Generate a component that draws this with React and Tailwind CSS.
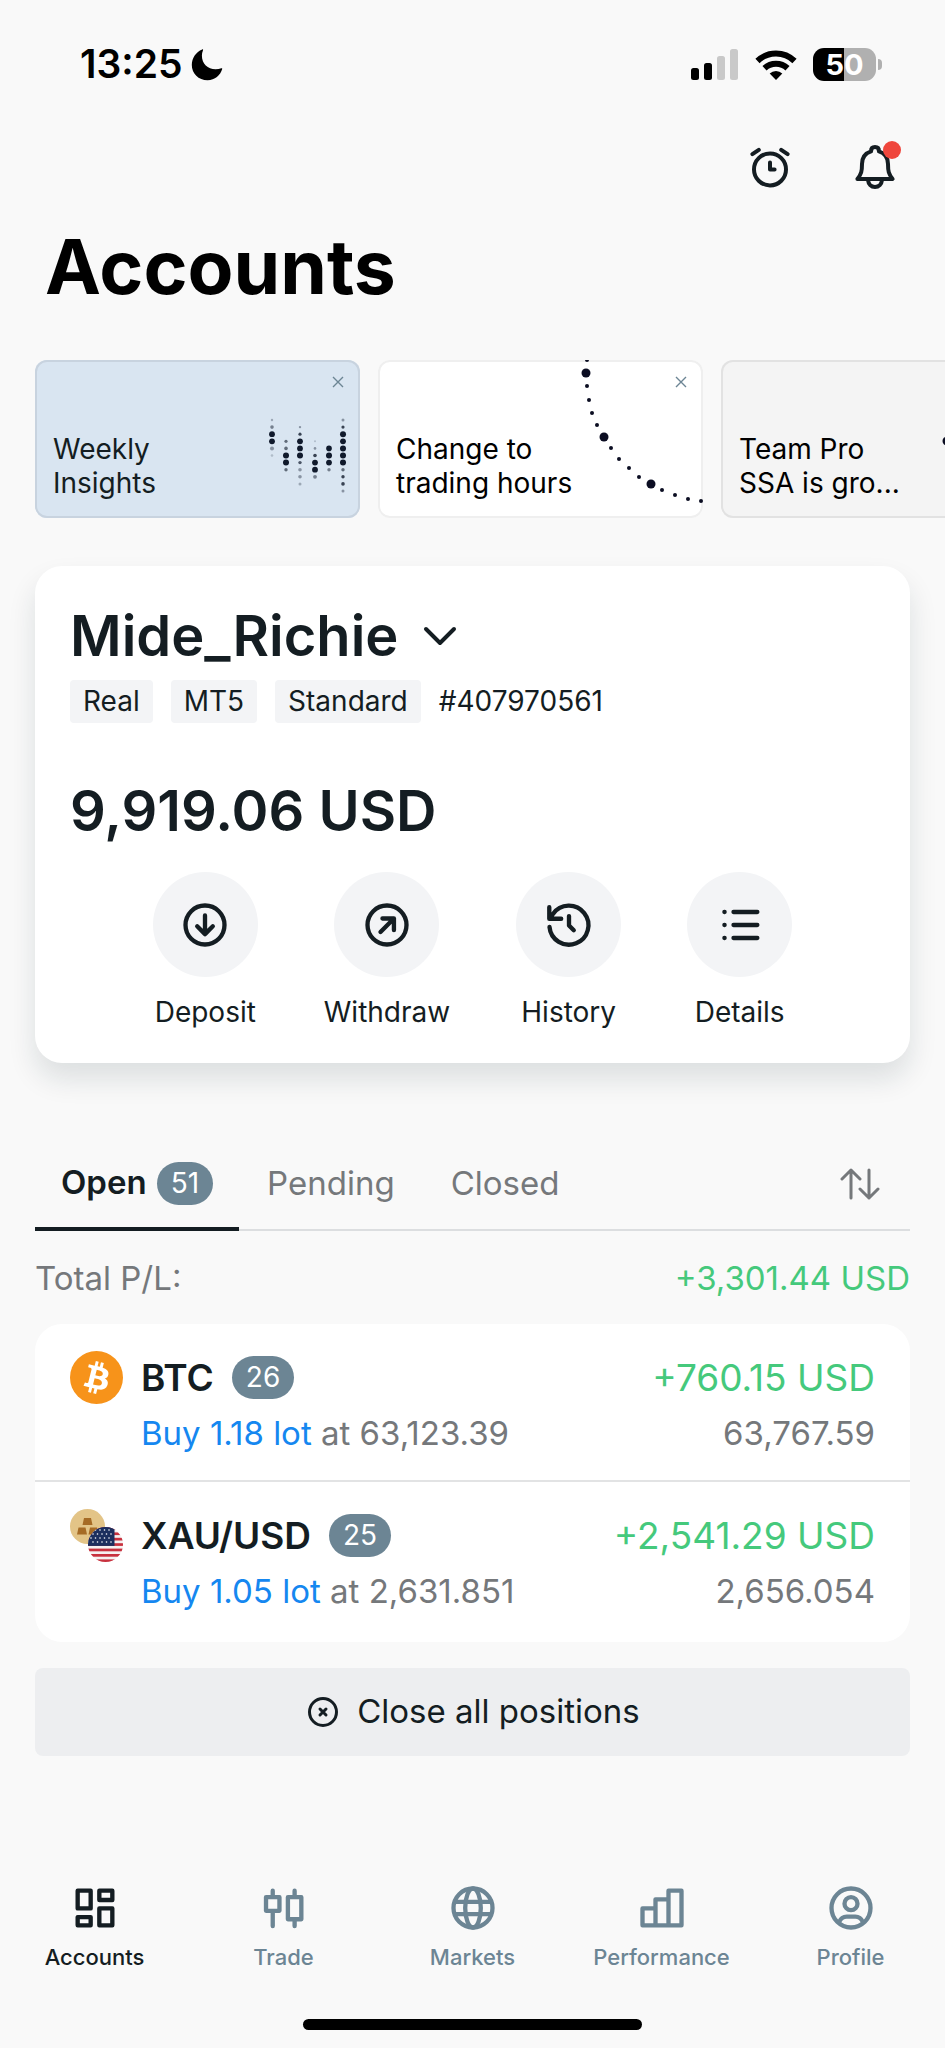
const weeklyColumns = [
  { x: 4, dots: [[0, 1.2, 0.3], [1, 1.8, 0.5], [2, 2.9, 1], [3, 2.9, 1], [4, 2, 0.4], [5, 1.3, 0.2]] },
  { x: 18, dots: [[3, 1.6, 0.6], [4, 1.8, 0.6], [5, 3, 1], [6, 3, 1], [7, 1.7, 0.6]] },
  { x: 32, dots: [[1, 1.2, 0.4], [2, 1.6, 0.8], [3, 2.9, 1], [4, 2.9, 1], [5, 3, 1], [6, 1.7, 0.7], [7, 1.8, 0.4], [8, 1.8, 0.4], [9, 1.5, 0.3]] },
  { x: 47, dots: [[3, 1, 0.2], [4, 1.3, 0.4], [5, 1.8, 0.8], [6, 2.9, 1], [7, 2.9, 1], [8, 1.9, 0.5]] },
  { x: 61, dots: [[4, 2.8, 1], [5, 3, 1], [6, 2.9, 1], [7, 1.7, 0.5]] },
  { x: 75, dots: [[0, 1.5, 0.4], [1, 1.6, 0.8], [2, 3, 1], [3, 2.9, 1], [4, 3, 1], [5, 3, 1], [6, 3, 1], [7, 1.7, 0.6], [8, 1.7, 0.8], [9, 1.8, 0.8], [10, 1.5, 0.4]] },
];

const arcDots = [
  [36, 0, 2], [35, 13, 4.5], [36, 26, 2], [38, 40, 2], [41, 53, 2], [46, 65, 2], [53, 77, 4.5],
  [60, 88, 2], [68, 99, 2], [78, 108, 2], [88, 117, 2], [100, 124, 4.5], [111, 130, 2],
  [124, 135, 2], [137, 139, 2], [150, 141, 2],
];

function MoonIcon() {
  return (
    <svg className="h-8 w-8" viewBox="0 0 32 32" aria-hidden="true">
      <path d="M12 1.200C11.200 3 10.900 4.800 10.900 6.800c0 7.800 5.800 13.400 13.700 13.400 2.100 0 4-.3 5.700-1 .7-.2 1.100.2.900.9C29.300 26.600 23.900 31.200 16.600 31.200 7.500 31.200.8 24.600.8 16 .8 8.900 5 2.900 11.200.4c.7-.3 1.100.1.8.8z" fill="#000" />
    </svg>
  );
}

function SignalIcon() {
  return (
    <svg className="h-8 w-12" viewBox="0 0 48 32" aria-hidden="true">
      <rect x="0" y="19" width="8" height="12" rx="2.500" fill="#000" />
      <rect x="13" y="14" width="8" height="17" rx="2.500" fill="#000" />
      <rect x="26" y="7" width="8" height="24" rx="2.500" fill="#c9c9c9" />
      <rect x="39" y="0" width="8" height="31" rx="2.500" fill="#c9c9c9" />
    </svg>
  );
}

function WifiIcon() {
  return (
    <svg className="h-8 w-[42px]" viewBox="1 0 42 32" aria-hidden="true">
      <g fill="none" stroke="#000" strokeWidth="6">
        <path d="M3.500 12a26.500 26.500 0 0 1 37 0" />
        <path d="M10.500 19.200a16.800 16.800 0 0 1 23 0" />
      </g>
      <path d="M22 31l-6.300-6.500a9 9 0 0 1 12.600 0z" fill="#000" />
    </svg>
  );
}

function Battery() {
  return (
    <div className="flex items-center gap-0.5">
      <div className="flex h-[33px] w-[63px] items-center justify-center rounded-[11px] bg-[linear-gradient(90deg,#000_50%,#b0b0b0_50%)] text-[29px] leading-none font-bold text-white">
        50
      </div>
      <div className="h-[11px] w-1 rounded-r-full bg-[#b0b0b0]" />
    </div>
  );
}

function Icon({ className = "size-12", width = 2, children }) {
  return (
    <svg className={className} viewBox="0 0 24 24" fill="none" stroke="currentColor" strokeWidth={width} strokeLinecap="round" strokeLinejoin="round" aria-hidden="true">
      {children}
    </svg>
  );
}

function PromoCard({ lines, className, children }) {
  return (
    <article className={"relative flex h-[158px] w-[325px] shrink-0 items-end overflow-hidden rounded-xl px-[18px] pb-[18px] ring-2 ring-inset " + className}>
      {children}
      <p className="text-[28px] leading-[34px]">
        {lines[0]}
        <br />
        {lines[1]}
      </p>
      <button type="button" aria-label={"Dismiss " + lines.join(" ")} className="absolute top-3 right-3 flex size-5 items-center justify-center text-[#6c8594]">
        <svg className="size-3" viewBox="0 0 12 12" stroke="currentColor" strokeWidth="1.400" aria-hidden="true">
          <path d="M1 1l10 10M11 1L1 11" />
        </svg>
      </button>
    </article>
  );
}

function Chip({ children }) {
  return <span className="rounded-sm bg-[#f3f4f6] px-[13px] leading-[43px]">{children}</span>;
}

function Action({ label, children }) {
  return (
    <button type="button" className="flex min-w-[105px] flex-col items-center gap-[18px]">
      <span className="flex size-[105px] items-center justify-center rounded-full bg-[#f3f4f6]">{children}</span>
      <span className="text-[28px] leading-[34px]">{label}</span>
    </button>
  );
}

function Badge({ children }) {
  return <span className="rounded-full bg-[#6c8594] px-3.5 text-[28px] leading-[43px] font-normal text-white">{children}</span>;
}

function BitcoinIcon() {
  return (
    <svg className="size-[53px]" viewBox="0 0 32 32" aria-hidden="true">
      <circle cx="16" cy="16" r="16" fill="#f7931a" />
      <path fill="#fff" d="M23.189 14.020c.314-2.096-1.283-3.223-3.465-3.975l.708-2.840-1.728-.430-.690 2.765c-.454-.114-.920-.220-1.385-.326l.695-2.783L15.596 6l-.708 2.839c-.376-.086-.746-.170-1.104-.260l.002-.009-2.384-.595-.460 1.846s1.283.294 1.256.312c.700.175.826.638.805 1.006l-.806 3.235c.048.012.110.030.180.057l-.183-.045-1.130 4.532c-.086.212-.303.531-.793.410.018.025-1.256-.313-1.256-.313l-.858 1.978 2.250.561c.418.105.828.215 1.231.318l-.715 2.872 1.727.430.708-2.840c.472.127.930.245 1.378.357l-.706 2.828 1.728.430.715-2.866c2.948.558 5.164.333 6.097-2.333.752-2.146-.037-3.385-1.588-4.192 1.130-.260 1.980-1.003 2.207-2.538zm-3.950 5.538c-.533 2.147-4.148.986-5.320.695l.950-3.805c1.172.293 4.929.872 4.370 3.110zm.535-5.569c-.487 1.953-3.495.960-4.470.717l.860-3.450c.975.243 4.118.696 3.610 2.733z" />
    </svg>
  );
}

function GoldDollarIcon() {
  return (
    <svg className="size-[53px]" viewBox="0 0 53 53" aria-hidden="true">
      <defs>
        <clipPath id="flag-circle">
          <circle cx="35.500" cy="35.500" r="17.500" />
        </clipPath>
      </defs>
      <circle cx="17.500" cy="17.500" r="17.500" fill="#e3c487" />
      <g fill="#a66b25">
        <path d="M14 9h7l1.500 7h-10zM8.500 18.500h7l1.500 7H7zM20 18.500h7l1.500 7h-10z" />
      </g>
      <g clipPath="url(#flag-circle)">
        <rect x="18" y="18" width="35" height="35" fill="#f5f1f1" />
        <g fill="#c8313e">
          <rect x="18" y="18" width="35" height="2.700" />
          <rect x="18" y="23.400" width="35" height="2.700" />
          <rect x="18" y="28.800" width="35" height="2.700" />
          <rect x="18" y="34.200" width="35" height="2.700" />
          <rect x="18" y="39.600" width="35" height="2.700" />
          <rect x="18" y="45" width="35" height="2.700" />
          <rect x="18" y="50.400" width="35" height="2.700" />
        </g>
        <rect x="18" y="18" width="26.500" height="18.900" fill="#1c2f5e" />
        <g fill="#fff">
          {[21, 25, 29, 33].map((y, row) =>
            [21, 25.5, 30, 34.5, 39].map((x) => <circle key={x + "-" + y} cx={x + (row % 2) * 2} cy={y} r="0.800" />)
          )}
        </g>
      </g>
    </svg>
  );
}

function Position({ icon, symbol, count, profit, side, open, current }) {
  return (
    <li className="flex gap-[18px] px-[35px] pt-[27px] pb-6">
      {icon}
      <div className="flex-1">
        <div className="flex h-[53px] items-center justify-between text-[37px]">
          <div className="flex items-center gap-[18px] font-semibold">
            {symbol}
            <Badge>{count}</Badge>
          </div>
          <span className="text-[#45c97c]">{profit}</span>
        </div>
        <div className="flex items-center justify-between pt-1.5 text-[33px] leading-[46px] text-[#75787b]">
          <p>
            <span className="text-[#1587f0]">{side}</span> at {open}
          </p>
          <span>{current}</span>
        </div>
      </div>
    </li>
  );
}

function NavItem({ label, active, children }) {
  return (
    <a href="#" aria-current={active ? "page" : undefined} className={"flex flex-1 flex-col items-center gap-2 text-[22px] leading-[30px] font-medium " + (active ? "text-[#141d22]" : "text-[#6c8594]")}>
      {children}
      {label}
    </a>
  );
}

export default function App() {
  return (
    <div className="flex min-h-screen flex-col overflow-hidden bg-[#f9f9f9] font-['Inter',sans-serif] text-[#141d22]">
      <div className="flex h-[129px] items-center justify-between pr-[63px] pl-20">
        <div className="flex items-center gap-2 text-[39px] font-semibold text-black">
          13:25
          <MoonIcon />
        </div>
        <div className="flex items-center gap-4">
          <SignalIcon />
          <WifiIcon />
          <Battery />
        </div>
      </div>

      <header>
        <div className="flex h-[76px] items-center justify-end gap-[57px] pr-[46px]">
          <button type="button" aria-label="Alarms">
            <Icon>
              <circle cx="12" cy="13.200" r="8" />
              <path d="M12 9.800v3.400h2.300M6.400 3.400L3.200 5.600M17.600 3.400l3.200 2.200" />
            </Icon>
          </button>
          <button type="button" aria-label="Notifications, new" className="relative">
            <Icon>
              <path d="M10 4.200C10 2.800 10.800 2 12 2s2 .8 2 2.200c2.700.9 4.500 3.200 4.500 6.300 0 3.500.3 5 2.300 7.500H3.200c2-2.500 2.300-4 2.300-7.500 0-3.100 1.800-5.400 4.500-6.300z" />
              <path d="M8.500 18.500c.2 2 1.600 3.500 3.500 3.500s3.300-1.500 3.500-3.500" />
            </Icon>
            <span className="absolute -top-0.5 -right-0.5 size-[18px] rounded-full bg-[#ef463c]" />
          </button>
        </div>
        <h1 className="px-[45px] pt-4 text-[75px] leading-[92px] font-bold text-black">Accounts</h1>
      </header>

      <section aria-label="News" className="mt-[47px] flex gap-[18px] pl-[35px]">
        <PromoCard lines={["Weekly", "Insights"]} className="bg-[#d9e5f1] ring-[#c8d3df]">
          <svg className="absolute right-3 bottom-[22px] h-[80px] w-20" viewBox="0 0 80 80" aria-hidden="true">
            {weeklyColumns.map((column) =>
              column.dots.map(([row, r, opacity]) => (
                <circle key={column.x + "-" + row} cx={column.x} cy={4 + row * 7.1} r={r} fill="#101a2c" opacity={opacity} />
              ))
            )}
          </svg>
        </PromoCard>
        <PromoCard lines={["Change to", "trading hours"]} className="bg-white text-black ring-[#efefef]">
          <svg className="absolute top-0 right-0 h-[158px] w-[152px]" viewBox="0 0 152 158" fill="#0b0d22" aria-hidden="true">
            {arcDots.map(([x, y, r]) => (
              <circle key={x + "-" + y} cx={x} cy={y} r={r} />
            ))}
          </svg>
        </PromoCard>
        <PromoCard lines={["Team Pro", "SSA is gro..."]} className="bg-[#f4f4f4] text-black ring-[#e2e2e2]">
          <svg className="absolute top-[76px] left-[221px] size-2.5" viewBox="0 0 10 10" fill="#0b0d22" aria-hidden="true">
            <circle cx="5" cy="5" r="4.500" />
          </svg>
        </PromoCard>
      </section>

      <main className="px-[35px]">
        <section className="mt-12 rounded-[27px] bg-white px-[35px] pt-9 pb-[34px] shadow-[0_16px_28px_rgba(20,40,50,0.12)]">
          <button type="button" className="flex items-center gap-6 text-[56px] leading-[68px] font-semibold">
            Mide_Richie
            <svg className="h-5 w-9" viewBox="0 0 36 20" fill="none" stroke="currentColor" strokeWidth="4" strokeLinecap="round" strokeLinejoin="round" aria-hidden="true">
              <path d="M4 3l14 14L32 3" />
            </svg>
          </button>
          <div className="mt-2.5 flex gap-[18px] text-[28px] leading-[43px]">
            <Chip>Real</Chip>
            <Chip>MT5</Chip>
            <Chip>Standard</Chip>
            <span>#407970561</span>
          </div>
          <p className="mt-[54px] text-[56px] leading-[68px] font-semibold">9,919.06 USD</p>
          <div className="mt-[27px] flex justify-center gap-[66px]">
            <Action label="Deposit">
              <Icon className="size-[52px]">
                <circle cx="12" cy="12" r="9" />
                <path d="M12 7.600v8.600M8.400 12.600l3.600 3.600 3.600-3.600" />
              </Icon>
            </Action>
            <Action label="Withdraw">
              <Icon className="size-[52px]">
                <circle cx="12" cy="12" r="9" />
                <path d="M9 15.200l6.200-6.200M9.900 9h5.300v5.300" />
              </Icon>
            </Action>
            <Action label="History">
              <Icon className="size-[52px]">
                <path d="M3 12.900A9 9 0 1 0 4.600 6.900L3.200 9.100M2.900 3.800v5.300h5.500" />
                <path d="M12 7.900v4.300l2.200 2.200" />
              </Icon>
            </Action>
            <Action label="Details">
              <Icon className="size-[52px]">
                <path d="M9 6h11M9 12h11M9 18h11" />
                <path d="M4.800 6h.1M4.800 12h.1M4.800 18h.1" />
              </Icon>
            </Action>
          </div>
        </section>

        <div className="mt-[70px] flex items-stretch justify-between border-b-2 border-[#dcdee0] text-[33px]">
          <div role="tablist" className="flex">
            <button type="button" role="tab" aria-selected="true" className="-mb-0.5 flex h-[98px] items-center gap-2.5 border-b-4 border-[#141d22] px-[26px] pt-1.5 font-semibold">
              Open
              <Badge>51</Badge>
            </button>
            <button type="button" role="tab" aria-selected="false" className="h-24 px-7 pt-1.5 text-[#75787b]">Pending</button>
            <button type="button" role="tab" aria-selected="false" className="h-24 px-7 pt-1.5 text-[#75787b]">Closed</button>
          </div>
          <button type="button" aria-label="Sort" className="mr-[30px] pt-1.5 text-[#75787b]">
            <svg className="h-8 w-10" viewBox="0 0 40 32" fill="none" stroke="currentColor" strokeWidth="3" strokeLinecap="round" strokeLinejoin="round" aria-hidden="true">
              <path d="M11 30V2M2 11l9-9 9 9M29 2v28M20 21l9 9 9-9" />
            </svg>
          </button>
        </div>

        <div className="flex items-center justify-between pt-6 pb-[23px] text-[33px] leading-[46px]">
          <span className="text-[#75787b]">Total P/L:</span>
          <span className="text-[#45c97c]">+3,301.44 USD</span>
        </div>

        <ul className="divide-y-2 divide-[#e2e3e4] rounded-[27px] bg-white pb-1">
          <Position icon={<BitcoinIcon />} symbol="BTC" count="26" profit="+760.15 USD" side="Buy 1.18 lot" open="63,123.39" current="63,767.59" />
          <Position icon={<GoldDollarIcon />} symbol="XAU/USD" count="25" profit="+2,541.29 USD" side="Buy 1.05 lot" open="2,631.851" current="2,656.054" />
        </ul>

        <button type="button" className="mt-[26px] flex h-[88px] w-full items-center justify-center gap-4 rounded-lg bg-[#edeef0] text-[33px]">
          <Icon className="size-9" width={2}>
            <circle cx="12" cy="12" r="9" />
            <path d="M10 10l4 4M14 10l-4 4" />
          </Icon>
          Close all positions
        </button>
      </main>

      <nav className="mt-auto flex pt-8">
        <NavItem label="Accounts" active>
          <Icon className="size-[52px]">
            <path d="M4 4h6v8.200H4zM14 4h6v4.300h-6zM14 12.200h6V20h-6zM4 16.200h6V20H4z" />
          </Icon>
        </NavItem>
        <NavItem label="Trade">
          <Icon className="size-[52px]">
            <path d="M3.700 7h6.200v6.300H3.700zM13.800 7H20v10.200h-6.200zM6.800 4v3M6.800 13.300V20.300M16.900 4v3M16.900 17.200v3.100" />
          </Icon>
        </NavItem>
        <NavItem label="Markets">
          <Icon className="size-[52px]">
            <circle cx="12" cy="12" r="9" />
            <ellipse cx="12" cy="12" rx="3.600" ry="9" />
            <path d="M4 9.200h16M4 14.800h16" />
          </Icon>
        </NavItem>
        <NavItem label="Performance">
          <Icon className="size-[52px]">
            <path d="M3 12.200h6V20H3zM9 8h6v12H9zM15 4h6v16h-6z" />
          </Icon>
        </NavItem>
        <NavItem label="Profile">
          <Icon className="size-[52px]">
            <circle cx="12" cy="12" r="9" />
            <circle cx="12" cy="10" r="3" />
            <path d="M6.500 18.500c.8-1.800 2-2.500 3.500-2.500h4c1.500 0 2.700.7 3.500 2.500" />
          </Icon>
        </NavItem>
      </nav>
      <div className="mt-[47px] mb-[18px] h-[11px] w-[339px] self-center rounded-full bg-black" />
    </div>
  );
}
